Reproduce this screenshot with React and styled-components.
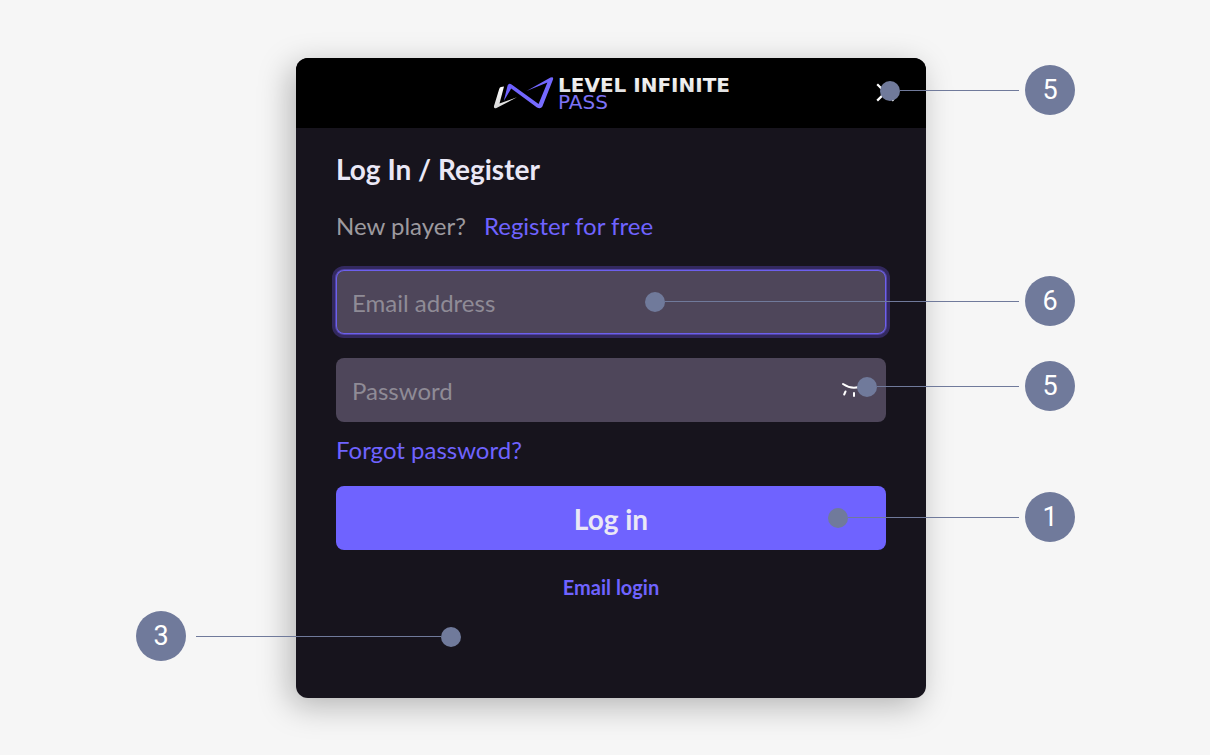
import React from 'react';
import styled, { createGlobalStyle } from 'styled-components';

const callouts = [
  { label: '5', side: 'right', top: 7, length: 195 },
  { label: '6', side: 'right', top: 218, length: 430 },
  { label: '5', side: 'right', top: 303, length: 218 },
  { label: '1', side: 'right', top: 434, length: 247 },
  { label: '3', side: 'left', top: 553, length: 325 },
];

const Logo = () => (
  <LogoSvg width="234" height="36" viewBox="0 0 234 36" role="img" aria-label="Level Infinite Pass">
    <defs>
      <linearGradient id="violet" x1="0" y1="0" x2="1" y2="1">
        <stop offset="0" stopColor="#6a5cff" />
        <stop offset="1" stopColor="#7a70ff" />
      </linearGradient>
      <linearGradient id="silver" x1="0" y1="0" x2="0" y2="1">
        <stop offset="0" stopColor="#ffffff" />
        <stop offset="1" stopColor="#d8d8d8" />
      </linearGradient>
    </defs>
    <path d="M10 11.5 L7 12 Q5.8 12.2 5.2 14 L0 31 Q-0.4 33.8 2.5 33 L23 22.3 L5.5 28.6 Z" fill="url(#silver)" />
    <path d="M9.8 26 L13.6 10.5 Q14.8 7.6 17.6 9.4 L44.6 29 L53.4 7.6 L32.5 16 L56.5 2.6 Q59.8 1.4 59 4.4 L48.4 31.4 Q46.6 34.4 43 32.4 L17.2 13.6 Z" fill="url(#violet)" />
    <LogoText x="64" y="17" $size={20} $bold fill="url(#silver)">LEVEL INFINITE</LogoText>
    <LogoText x="64" y="34" $size={20} fill="#7c72f6">PASS</LogoText>
  </LogoSvg>
);

const CloseIcon = () => (
  <svg width="20" height="20" viewBox="0 0 20 20" fill="none" stroke="#fff" strokeWidth="2.2" aria-hidden="true">
    <path d="M1.2 1.2 L17.6 17.6 M17.6 1.2 L1.2 17.6" />
  </svg>
);

const ClosedEyeIcon = () => (
  <svg width="24" height="24" viewBox="0 0 24 24" fill="none" stroke="#fff" strokeWidth="2" strokeLinecap="round" aria-hidden="true">
    <path d="M1 6 Q12 13.5 23 6 M3.5 13.5 L2.2 16.5 M12 15 V18 M20.5 13.5 L21.8 16.5" />
  </svg>
);

const App = () => {
  return (
    <>
      <GlobalStyle />
      <PageWrapper>
        <Stage>
          <Card>
            <CardHeader>
              <Logo />
              <CloseButton type="button" aria-label="Close"><CloseIcon /></CloseButton>
            </CardHeader>
            <LoginForm onSubmit={(e) => e.preventDefault()}>
              <h1>Log In / Register</h1>
              <NewPlayerText>
                New player?
                <TextLink href="#register">Register for free</TextLink>
              </NewPlayerText>
              <Field $active>
                <input type="email" placeholder="Email address" aria-label="Email address" />
              </Field>
              <Field>
                <input type="password" placeholder="Password" aria-label="Password" />
                <IconButton type="button" aria-label="Show password"><ClosedEyeIcon /></IconButton>
              </Field>
              <ForgotLink href="#forgot">Forgot password?</ForgotLink>
              <LoginButton type="submit">Log in</LoginButton>
              <EmailLoginLink href="#email">Email login</EmailLoginLink>
            </LoginForm>
          </Card>
          {callouts.map((item) => (
            <Callout key={item.top} $side={item.side} $top={item.top} $length={item.length}>
              <Dot />
              <Line />
              <Badge $side={item.side}>{item.label}</Badge>
            </Callout>
          ))}
        </Stage>
      </PageWrapper>
    </>
  )
};

export default App;

const GlobalStyle = createGlobalStyle`
    * {
        box-sizing: border-box;
    }

    body {
        margin: 0;
        background-color: #f6f6f6;
        font-family: 'Lato', sans-serif;
    }
`
const PageWrapper = styled.main`
    display: flex;
    justify-content: center;
    padding: 58px 0 57px;
`
const Stage = styled.div`
    position: relative;
    width: 100%;
    max-width: 940px;
    padding-left: 161px;
    padding-right: 149px;
`
const Card = styled.section`
    display: flex;
    flex-direction: column;
    border-radius: 12px;
    background-color: #17141d;
    box-shadow: -6px 8px 32px rgba(0, 0, 0, 0.27);
`
const CardHeader = styled.header`
    display: grid;
    grid-template-columns: 1fr auto 1fr;
    align-items: center;
    height: 70px;
    padding: 0 30px;
    border-radius: 12px 12px 0 0;
    background-color: #000;

    > svg {
        grid-column: 2;
    }
`
const LogoSvg = styled.svg`
    overflow: visible;
`
const LogoText = styled.text`
    font-family: 'DejaVu Sans', sans-serif;
    font-size: ${(props) => props.$size}px;
    font-weight: ${(props) => (props.$bold ? 700 : 400)};
`
const IconButton = styled.button`
    display: flex;
    padding: 0;
    border: none;
    background: none;
    cursor: pointer;
`
const CloseButton = styled(IconButton)`
    justify-self: end;
`
const LoginForm = styled.form`
    display: flex;
    flex-direction: column;
    padding: 24px 40px 97px;

    > h1 {
        margin: 0;
        color: #eae8f6;
        font-size: 28px;
        font-weight: 700;
        line-height: 34px;
    }
`
const NewPlayerText = styled.p`
    display: flex;
    gap: 18px;
    margin: 22px 0 26px;
    color: #9d9a9f;
    font-size: 24px;
    line-height: 36px;
`
const TextLink = styled.a`
    color: #6f63ff;
    font-size: 24px;
    line-height: 36px;
    text-decoration: none;
`
const Field = styled.div`
    display: flex;
    align-items: center;
    height: 64px;
    margin-bottom: ${(props) => (props.$active ? 24 : 10)}px;
    padding: 0 20px 0 16px;
    border-radius: 8px;
    background-color: #4e465a;
    box-shadow: ${(props) => (props.$active ? 'inset 0 0 0 1px #6d60ee, 0 0 0 1px #5144a6, 0 0 0 4px #33295f' : 'none')};

    > input {
        flex: 1;
        min-width: 0;
        height: 100%;
        padding: 1px 0 0;
        border: none;
        outline: none;
        background: none;
        color: #eae8f6;
        font-family: inherit;
        font-size: 24px;
    }

    > input::placeholder {
        color: #8f8b96;
        opacity: 1;
    }
`
const ForgotLink = styled(TextLink)`
    align-self: flex-start;
    margin-bottom: 18px;
`
const LoginButton = styled.button`
    height: 64px;
    padding: 2px 0 0;
    border: none;
    border-radius: 8px;
    background-color: #6f63ff;
    color: #eae8f6;
    font-family: inherit;
    font-size: 28px;
    font-weight: 700;
    cursor: pointer;
`
const EmailLoginLink = styled(TextLink)`
    align-self: center;
    margin-top: 23px;
    font-size: 20px;
    font-weight: 700;
    line-height: 28px;
`
const Callout = styled.div`
    position: absolute;
    top: ${(props) => props.$top}px;
    ${(props) => (props.$side === 'right' ? 'right: 0;' : 'left: 1px;')}
    display: flex;
    flex-direction: ${(props) => (props.$side === 'right' ? 'row' : 'row-reverse')};
    align-items: center;
    width: ${(props) => props.$length}px;
    pointer-events: none;
`
const Dot = styled.span`
    width: 20px;
    height: 20px;
    margin-top: 2px;
    border-radius: 50%;
    background-color: #707a9b;
`
const Line = styled.span`
    flex: 1;
    height: 1px;
    background-color: #707a9b;
`
const Badge = styled.span`
    display: flex;
    align-items: center;
    justify-content: center;
    width: 50px;
    height: 50px;
    margin: ${(props) => (props.$side === 'right' ? '0 0 0 6px' : '0 10px 0 0')};
    border-radius: 50%;
    background-color: #707a9b;
    color: #fff;
    font-family: 'Roboto', sans-serif;
    font-size: 27px;
`
